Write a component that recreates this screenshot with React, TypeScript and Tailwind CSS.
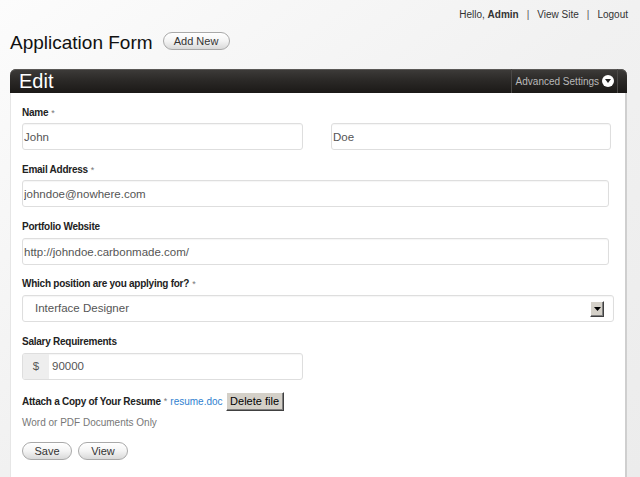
import React from 'react';

const Label = ({ text, required }: { text: string; required?: boolean }) => (
  <label className="block h-[12px] text-[10px] leading-[12px] font-bold tracking-[-0.25px] text-[#222]">
    {text}
    {required && <span className="ml-[3px] font-normal text-[9px] text-[#777]">*</span>}
  </label>
);

const Pill = ({ children, className = '' }: { children: React.ReactNode; className?: string }) => (
  <button
    className={`h-[18px] rounded-full border border-[#a9a9a9] bg-gradient-to-b from-white via-[#f4f4f4] to-[#d9d9d9] text-[11px] leading-[16px] text-[#333] shadow-[inset_0_1px_0_#fff] ${className}`}
  >
    {children}
  </button>
);

const inputCls =
  'h-[27px] rounded-[3px] border border-[#dedede] bg-white text-[11.5px] text-[#555] shadow-[inset_0_1px_1px_rgba(0,0,0,0.04)] outline-none';

export default function App() {
  return (
    <div className="min-h-[477px] bg-gradient-to-br from-[#fcfcfc] via-[#f1f1f1] to-[#ececec] font-['Liberation_Sans',Arial,sans-serif] text-[#333]">
      {/* top nav */}
      <div className="flex justify-end items-center h-[28px] pr-[12px] text-[10px] text-[#333]">
        <span>
          Hello, <b>Admin</b>
        </span>
        <span className="mx-[8px] text-[#555]">|</span>
        <span>View Site</span>
        <span className="mx-[8px] text-[#555]">|</span>
        <span>Logout</span>
      </div>

      {/* title */}
      <div className="flex items-center h-[30px] pl-[10px] -mt-[2px]">
        <h1 className="text-[19px] leading-[30px] text-[#111] mt-[3px]">Application Form</h1>
        <Pill className="ml-[10px] w-[67px] text-[10px]">Add New</Pill>
      </div>

      {/* panel */}
      <div className="ml-[10px] mt-[13px] w-[617px]">
        <div className="flex items-center h-[24px] rounded-t-[6px] bg-gradient-to-b from-[#3e3c3a] via-[#2a2826] to-[#1b1917] shadow-[inset_0_1px_0_#5a5856]">
          <span className="pl-[9px] text-[20px] leading-[24px] text-white">Edit</span>
          <div className="ml-auto flex items-center h-full border-l border-r border-[#4a4846] pl-[4px] pr-[3px] mr-[9px]">
            <span className="text-[10px] text-[#b9b9b9]">Advanced Settings</span>
            <span className="ml-[3px] flex h-[12px] w-[12px] items-center justify-center rounded-full bg-white">
              <svg width="6" height="4" viewBox="0 0 6 4">
                <path d="M0 0h6L3 4z" fill="#222" />
              </svg>
            </span>
          </div>
        </div>

        <div className="min-h-[384px] bg-white border-l border-[#e6e6e6] border-r-2 border-r-[#cfcfcf] pl-[11px] pt-[14px]">
          {/* Name */}
          <Label text="Name" required />
          <div className="mt-[4px] flex">
            <input className={`${inputCls} w-[281px] pl-[1px]`} defaultValue="John" />
            <input className={`${inputCls} w-[280px] ml-[28px] pl-[1px]`} defaultValue="Doe" />
          </div>

          <div className="mt-[14px]">
            <Label text="Email Address" required />
            <input className={`${inputCls} mt-[4px] block w-[587px] pl-[1px]`} defaultValue="johndoe@nowhere.com" />
          </div>

          <div className="mt-[14px]">
            <Label text="Portfolio Website" />
            <input
              className={`${inputCls} mt-[5px] block w-[587px] pl-[1px]`}
              defaultValue="http://johndoe.carbonmade.com/"
            />
          </div>

          <div className="mt-[13px]">
            <Label text="Which position are you applying for?" required />
            <div className={`${inputCls} mt-[5px] flex items-center w-[592px] pl-[12px] pr-[9px]`}>
              <span>Interface Designer</span>
              <span className="ml-auto flex h-[16px] w-[14px] items-center justify-center bg-[#d4d0c8] border border-t-white border-l-white border-r-[#404040] border-b-[#404040] shadow-[inset_-1px_-1px_0_#808080]">
                <svg width="7" height="4" viewBox="0 0 7 4">
                  <path d="M0 0h7L3.5 4z" fill="#000" />
                </svg>
              </span>
            </div>
          </div>

          <div className="mt-[14px]">
            <Label text="Salary Requirements" />
            <div className={`${inputCls} mt-[5px] flex items-stretch w-[281px] overflow-hidden`}>
              <span className="flex w-[26px] items-center justify-center bg-[#eeeeee] text-[#555]">$</span>
              <span className="flex items-center pl-[3px]">90000</span>
            </div>
          </div>

          <div className="mt-[12px] flex items-center h-[19px]">
            <span className="text-[10px] font-bold tracking-[-0.25px] text-[#222]">Attach a Copy of Your Resume</span>
            <span className="ml-[3px] text-[9px] text-[#777]">*</span>
            <span className="ml-[3px] text-[10px] text-[#2f7fd0]">resume.doc</span>
            <button className="ml-[3px] h-[19px] w-[58px] bg-[#d4d0c8] text-[11px] text-black border border-t-white border-l-white border-r-[#404040] border-b-[#404040] shadow-[inset_-1px_-1px_0_#808080]">
              Delete file
            </button>
          </div>

          <div className="mt-[6px] text-[10px] leading-[12px] text-[#777]">Word or PDF Documents Only</div>

          <div className="mt-[13px] flex gap-[6px]">
            <Pill className="w-[50px]">Save</Pill>
            <Pill className="w-[50px]">View</Pill>
          </div>
        </div>
      </div>
    </div>
  );
}
